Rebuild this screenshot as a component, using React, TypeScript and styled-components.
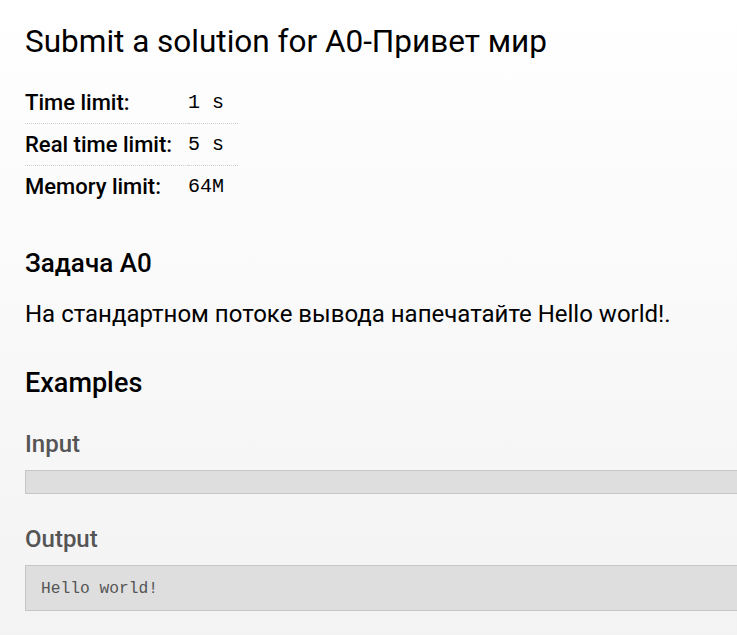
import React from "react";
import styled, { createGlobalStyle } from "styled-components";

const Global = createGlobalStyle`
  html, body { margin: 0; padding: 0; }
  html { background: #f3f3f3; }
  body {
    min-height: 635px;
    overflow: hidden;
    background: linear-gradient(to bottom, #ffffff 0px, #f3f3f3 635px);
    font-family: Roboto, "Noto Sans", sans-serif;
    color: #000;
  }
`;

const Page = styled.div`
  padding: 20px 0 0 25px;
`;

const Title = styled.h1`
  margin: 0 0 18px;
  font-family: Roboto, sans-serif;
  font-weight: 400;
  font-size: 31.5px;
  line-height: 44px;
`;

const Limits = styled.table`
  border-collapse: collapse;
  font-family: Roboto, sans-serif;
`;

const Row = styled.tr<{ $last?: boolean }>`
  border-bottom: ${(p) => (p.$last ? "none" : "1px dotted #d0d0d0")};
`;

const Label = styled.th`
  text-align: left;
  font-weight: 500;
  font-size: 22px;
  height: 41px;
  padding: 0 16px 0 0;
  vertical-align: middle;
`;

const Value = styled.td`
  font-family: "Liberation Mono", monospace;
  font-size: 20px;
  padding: 0 14px 0 0;
  white-space: pre;
`;

const Heading = styled.h2`
  margin: 39.5px 0 0;
  font-family: Roboto, sans-serif;
  font-weight: 500;
  font-size: 26px;
  line-height: 32px;
`;

const Paragraph = styled.p`
  margin: 19px 0 0;
  font-family: Roboto, sans-serif;
  font-size: 24px;
  line-height: 32px;
`;

const Examples = styled.h2`
  margin: 36px 0 0;
  font-family: Roboto, sans-serif;
  font-weight: 500;
  font-size: 27px;
  line-height: 34px;
`;

const SubHeading = styled.h3`
  margin: 29px 0 0;
  font-family: Roboto, sans-serif;
  font-weight: 500;
  font-size: 24px;
  line-height: 30px;
  color: #555;
`;

const Sample = styled.pre`
  margin: 11.5px -40px 0 0;
  background: #dedede;
  border: 1px solid #c6c6c6;
  padding: 12px 15px 10px;
  font-family: "Liberation Mono", monospace;
  font-size: 16.25px;
  line-height: 22px;
  color: #555;
  &:empty { padding: 11px 15px; }
  & + h3 { margin-top: 29.5px; }
`;

export default function App() {
  return (
    <>
      <Global />
      <Page>
        <Title>Submit a solution for A0-Привет мир</Title>
        <Limits>
          <tbody>
            <Row>
              <Label>Time limit:</Label>
              <Value>1 s</Value>
            </Row>
            <Row>
              <Label>Real time limit:</Label>
              <Value>5 s</Value>
            </Row>
            <Row $last>
              <Label>Memory limit:</Label>
              <Value>64M</Value>
            </Row>
          </tbody>
        </Limits>
        <Heading>Задача А0</Heading>
        <Paragraph>На стандартном потоке вывода напечатайте Hello world!.</Paragraph>
        <Examples>Examples</Examples>
        <SubHeading>Input</SubHeading>
        <Sample></Sample>
        <SubHeading>Output</SubHeading>
        <Sample>Hello world!</Sample>
      </Page>
    </>
  );
}
